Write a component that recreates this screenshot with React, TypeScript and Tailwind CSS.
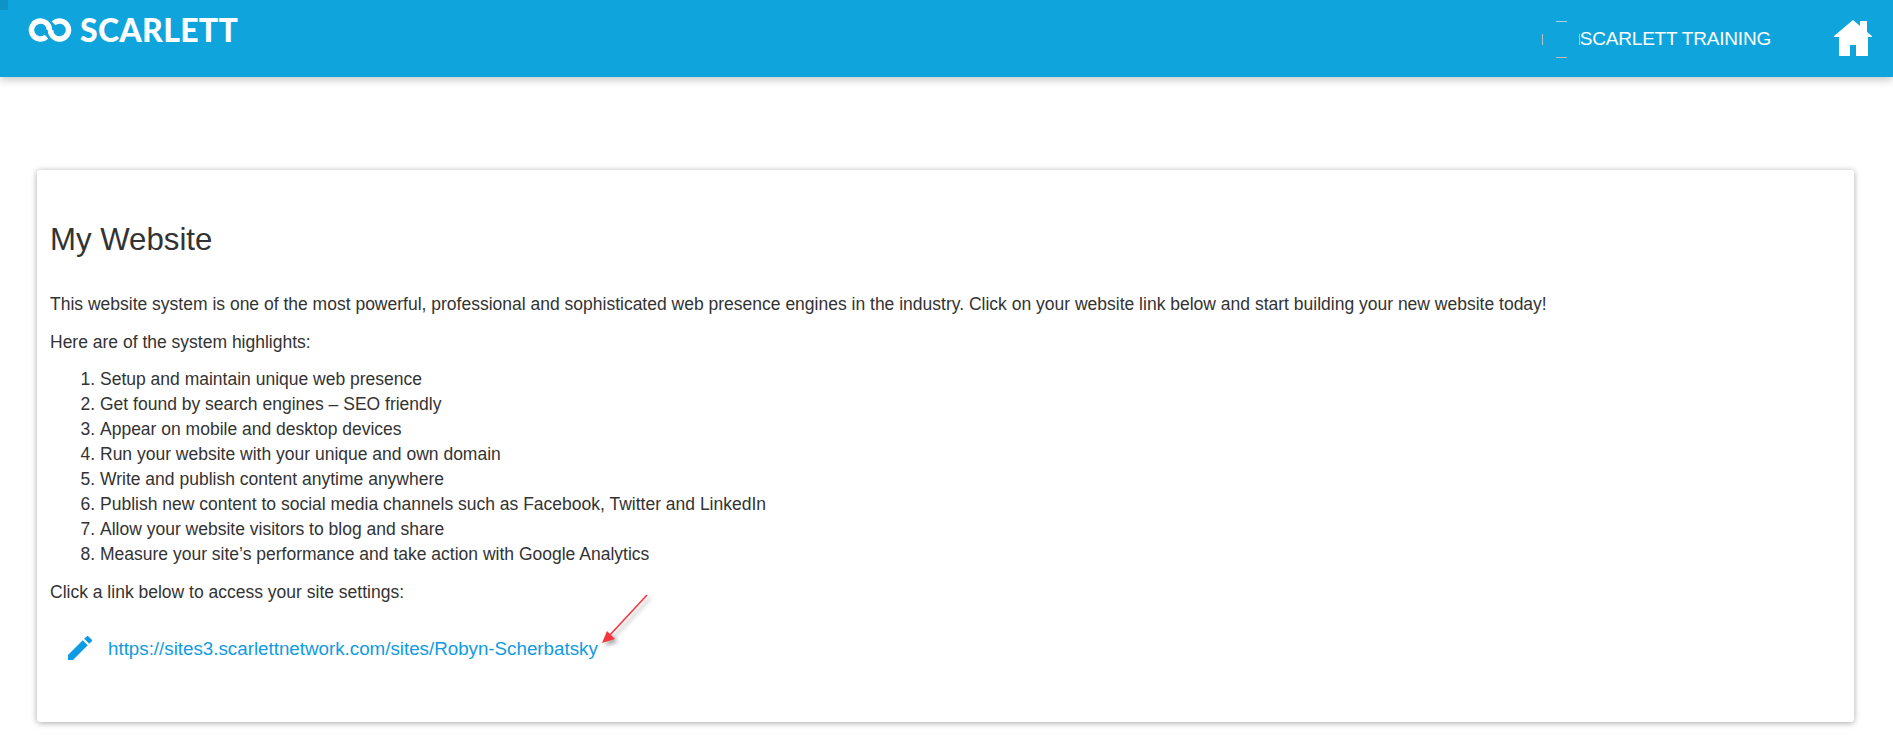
import React from "react";

const items = [
  "Setup and maintain unique web presence",
  "Get found by search engines – SEO friendly",
  "Appear on mobile and desktop devices",
  "Run your website with your unique and own domain",
  "Write and publish content anytime anywhere",
  "Publish new content to social media channels such as Facebook, Twitter and LinkedIn",
  "Allow your website visitors to blog and share",
  "Measure your site’s performance and take action with Google Analytics",
];

function LogoMark() {
  return (
    <svg width="44" height="24" viewBox="0 0 44 24" fill="none" stroke="#fff" strokeWidth="5.5" className="shrink-0">
      <path d="M18.5 18.7A9 9 0 1 1 21.5 12" />
      <path d="M25.5 5.3A9 9 0 1 1 22.5 12" />
    </svg>
  );
}

function HomeIcon() {
  return (
    <svg width="38" height="36" viewBox="0 0 38 36" fill="#fff" className="shrink-0">
      <path d="M19 0 L26 6 V1 H33 V12 L38 16 V17 H34 V36 H22 V25 H16 V36 H5 V17 H0 V16 Z" />
    </svg>
  );
}

function Avatar() {
  return (
    <div className="relative w-[38px] h-[37px] shrink-0">
      <span className="absolute left-[14px] top-0 w-[11px] h-px bg-[#a9d3e6]" />
      <span className="absolute left-[14px] bottom-0 w-[11px] h-px bg-[#c6b9b4]" />
      <span className="absolute left-0 top-[13px] h-[11px] w-px bg-[#b9c4c8]" />
      <span className="absolute right-0 top-[13px] h-[11px] w-px bg-[#b9c4c8]" />
    </div>
  );
}

export default function App() {
  return (
    <div className="relative h-[735px] overflow-hidden bg-white text-[17.5px] leading-[25px] text-[#333333] font-['Liberation_Sans',Arial,sans-serif]">
      <header className="relative h-[77px] bg-[#0fa5dc] shadow-[0_3px_8px_rgba(0,0,0,0.22)] flex justify-between">
        <span className="absolute left-0 top-0 w-[8px] h-[10px] bg-[#0d93c6]" />
        <div className="flex items-start pl-[28px] pt-[18px] gap-[8px]">
          <LogoMark />
          <span className="font-['Lato',sans-serif] font-black text-[32px] leading-[24px] tracking-[0.3px] text-white">SCARLETT</span>
        </div>
        <div className="flex items-start pr-[21px]">
          <div className="flex items-start mt-[21px]">
            <Avatar />
            <span className="text-[19px] leading-[35px] tracking-[-0.2px] text-white">SCARLETT TRAINING</span>
          </div>
          <div className="ml-[63px] mt-[20px]">
            <HomeIcon />
          </div>
        </div>
      </header>

      <main className="mt-[93px] ml-[37px] mr-[39px] h-[552px] rounded-[3px] bg-white px-[13px] shadow-[0_1px_6px_rgba(0,0,0,0.35)]">
        <h1 className="pt-[51px] text-[31.2px] leading-[38px] font-normal">My Website</h1>
        <p className="mt-[33px]">
          This website system is one of the most powerful, professional and sophisticated web presence engines in the industry. Click on your website link below and start building your new website today!
        </p>
        <p className="mt-[13px]">Here are of the system highlights:</p>
        <ol className="mt-[12px] pl-[50px] list-decimal">
          {items.map((t) => (
            <li key={t}>{t}</li>
          ))}
        </ol>
        <p className="mt-[13px]">Click a link below to access your site settings:</p>
        <div className="relative mt-[30px] ml-[18px] flex items-center h-[26px]">
          <svg width="24" height="24" viewBox="3 3 18 18" fill="#0f9be3" className="shrink-0">
            <path d="M3 17.25V21h3.75L17.81 9.94l-3.75-3.75L3 17.25zM20.71 7.04a1 1 0 0 0 0-1.41l-2.34-2.34a1 1 0 0 0-1.41 0l-1.83 1.83 3.75 3.75 1.83-1.83z" />
          </svg>
          <a className="ml-[16px] text-[18.76px] text-[#0f9be3]">https://sites3.scarlettnetwork.com/sites/Robyn-Scherbatsky</a>
          <svg width="46" height="49" viewBox="0 0 46 49" fill="none" className="absolute left-[534px] top-[-40px] overflow-visible drop-shadow-[3px_3px_2px_rgba(0,0,0,0.35)]">
            <path d="M45 0 L7 41" stroke="#f3373c" strokeWidth="1.6" />
            <path d="M0 48 L5 36 L13 44 Z" fill="#f3373c" />
          </svg>
        </div>
      </main>
    </div>
  );
}
